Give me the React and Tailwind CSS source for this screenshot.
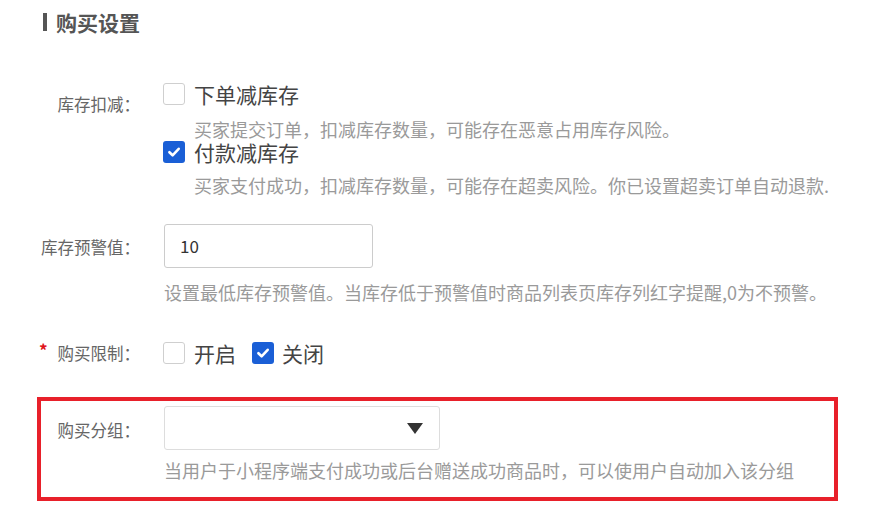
import React from "react";

const font = { fontFamily: '"Noto Sans CJK SC", "Noto Sans", sans-serif' };

function Box({ checked }) {
  if (checked) {
    return (
      <span className="flex h-[22px] w-[22px] shrink-0 items-center justify-center rounded-[3px] bg-[#1a5fd6]">
        <svg width="14" height="14" viewBox="0 0 14 14" fill="none">
          <path d="M2.4 7.2 L5.6 10.3 L11.7 3.8" stroke="white" strokeWidth="2.6" strokeLinecap="round" strokeLinejoin="round" />
        </svg>
      </span>
    );
  }
  return <span className="block h-[22px] w-[22px] shrink-0 rounded-[3px] border border-[#cfcfcf] bg-white" />;
}

export default function App() {
  return (
    <div className="h-[513px] w-[890px] overflow-hidden bg-white" style={font}>
      {/* Title */}
      <div className="flex h-[30px] items-center pl-[43px] mt-[7px]">
        <span className="block h-[18px] w-[4px] bg-[#555]" />
        <span className="ml-[9px] text-[21px] font-bold leading-[30px] text-[#555]">购买设置</span>
      </div>

      {/* Row 1 */}
      <div className="mt-[44px] flex">
        <div className="w-[140px] pt-[11px] text-right text-[16.5px] leading-[24px] text-[#666]">库存扣减：</div>
        <div className="ml-[23px] flex flex-col">
          <div className="flex h-[26px] items-center">
            <Box />
            <span className="ml-[9px] text-[21px] leading-[26px] text-[#444]">下单减库存</span>
          </div>
          <div className="mt-[13px] ml-[31px] text-[18px] leading-[18px] text-[#9a9a9a]">买家提交订单，扣减库存数量，可能存在恶意占用库存风险。</div>
          <div className="mt-[1px] flex h-[26px] items-center">
            <Box checked />
            <span className="ml-[9px] text-[21px] leading-[26px] text-[#444]">付款减库存</span>
          </div>
          <div className="mt-[11px] ml-[31px] text-[18px] leading-[18px] text-[#9a9a9a] whitespace-nowrap">买家支付成功，扣减库存数量，可能存在超卖风险。你已设置超卖订单自动退款.</div>
        </div>
      </div>

      {/* Row 2 */}
      <div className="mt-[30px] flex">
        <div className="w-[140px] pt-[11px] text-right text-[16.5px] leading-[24px] text-[#666]">库存预警值：</div>
        <div className="ml-[24px] flex flex-col">
          <div className="flex h-[44px] w-[209px] items-center rounded-[3px] border border-[#cccccc] pl-[15px] text-[17px] text-[#333]">10</div>
          <div className="mt-[14px] text-[18px] leading-[20px] text-[#9a9a9a] whitespace-nowrap">设置最低库存预警值。当库存低于预警值时商品列表页库存列红字提醒,0为不预警。</div>
        </div>
      </div>

      {/* Row 3 */}
      <div className="mt-[38px] flex">
        <div className="flex w-[140px] items-start pt-[1px] text-[16.5px] leading-[24px] text-[#666]">
          <span className="ml-[39px] mt-[-3px] font-bold text-[17px] text-[#e0141b]">*</span>
          <span className="ml-auto">购买限制：</span>
        </div>
        <div className="ml-[23px] flex h-[26px] items-center">
          <Box />
          <span className="ml-[9px] text-[21px] leading-[26px] text-[#444]">开启</span>
          <span className="ml-[16px]"><Box checked /></span>
          <span className="ml-[8px] text-[21px] leading-[26px] text-[#444]">关闭</span>
        </div>
      </div>

      {/* Red box */}
      <div className="ml-[37px] mt-[31px] w-[801px] border-4 border-[#e8202a] pt-[5px] pb-[15px]">
        <div className="flex">
          <div className="w-[99px] pt-[12px] text-right text-[16.5px] leading-[24px] text-[#666]">购买分组：</div>
          <div className="ml-[24px] flex flex-col">
            <div className="flex h-[44px] w-[276px] items-center justify-end rounded-[3px] border border-[#dddddd] pr-[16px]">
              <svg width="16" height="11" viewBox="0 0 16 11">
                <path d="M0 0 H16 L8 11 Z" fill="#333" />
              </svg>
            </div>
            <div className="mt-[8px] text-[18px] leading-[24px] text-[#9a9a9a] whitespace-nowrap">当用户于小程序端支付成功或后台赠送成功商品时，可以使用户自动加入该分组</div>
          </div>
        </div>
      </div>
    </div>
  );
}
